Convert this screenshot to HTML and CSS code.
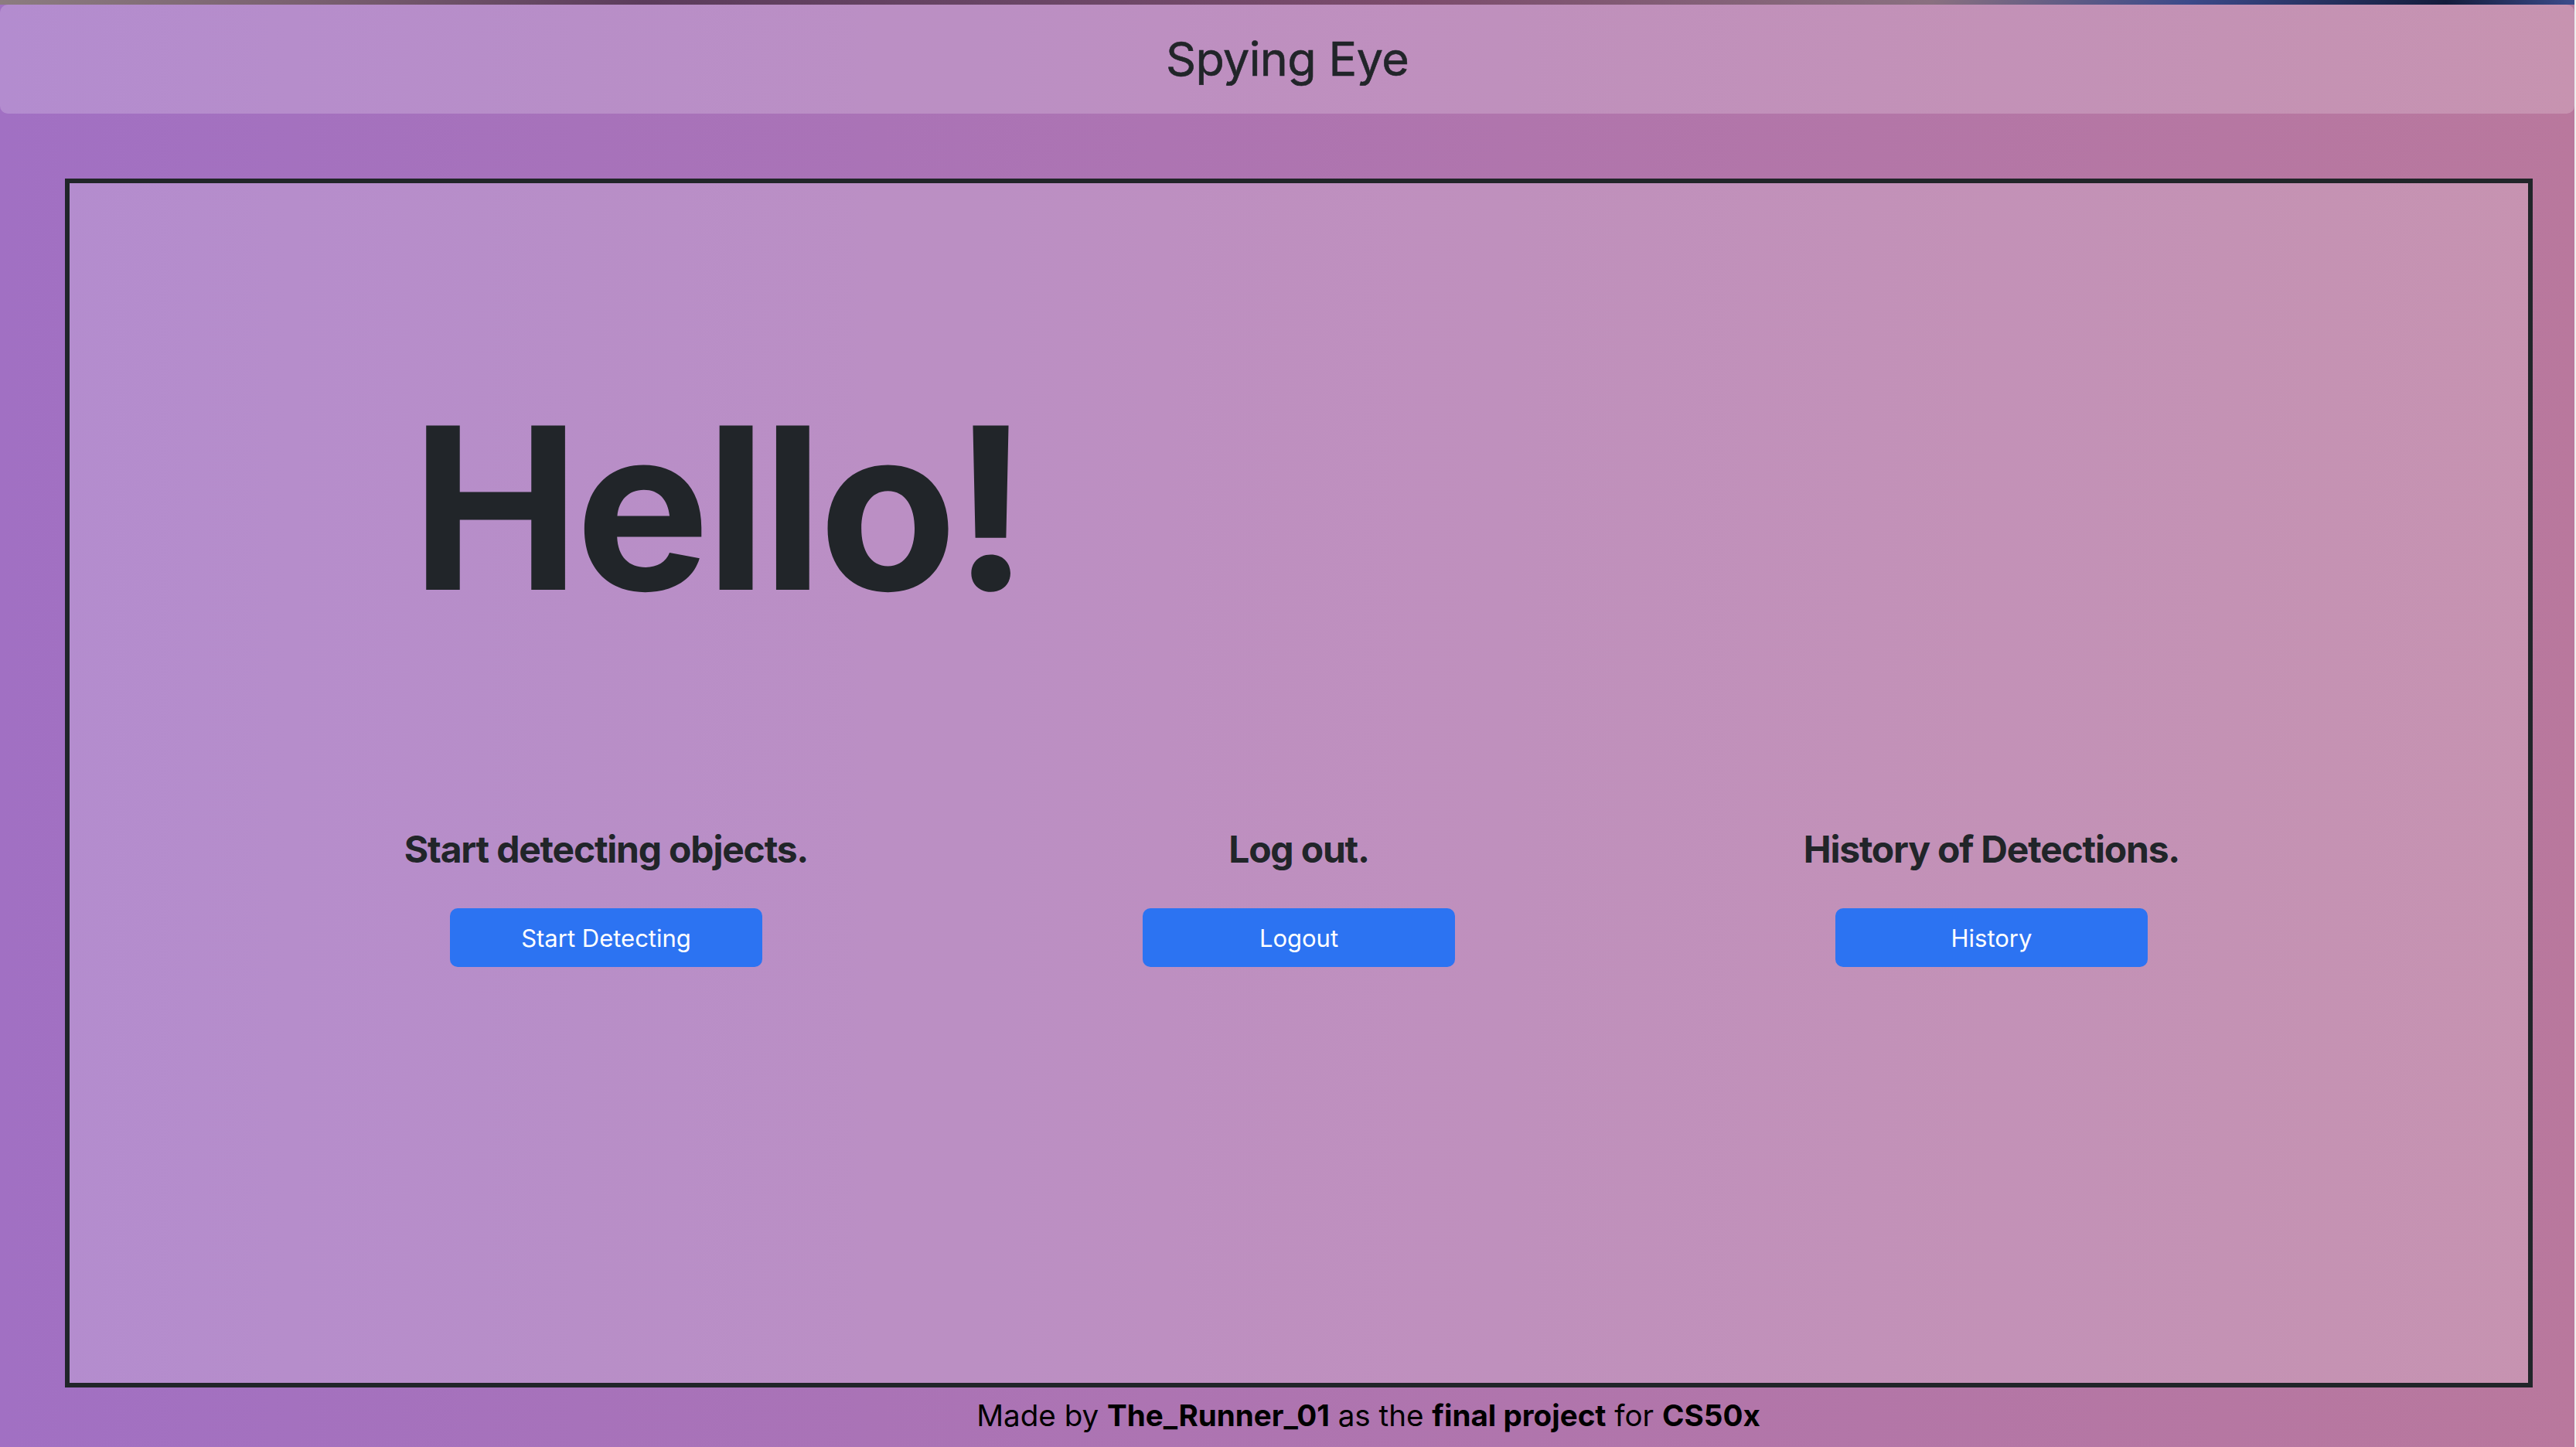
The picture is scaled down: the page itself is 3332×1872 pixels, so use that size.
FILE: index.html
```html
<!DOCTYPE html>
<html lang="en">
<head>
    <meta charset="UTF-8">
    <meta name="viewport" content="width=device-width, initial-scale=1.0">
    <title>Spying Eye</title>
    <link rel="stylesheet" href="styles.css">
</head>
<body>
    <div class="page">
        <div class="top-strip"></div>

        <nav class="navbar">
            <span class="brand">Spying Eye</span>
        </nav>

        <main class="main-box">
            <h1 class="hello">Hello!</h1>

            <div class="actions">
                <div class="action">
                    <h3>Start detecting objects.</h3>
                    <button type="button" class="btn">Start Detecting</button>
                </div>
                <div class="action">
                    <h3>Log out.</h3>
                    <button type="button" class="btn">Logout</button>
                </div>
                <div class="action">
                    <h3>History of Detections.</h3>
                    <button type="button" class="btn">History</button>
                </div>
            </div>
        </main>

        <footer class="footer">
            Made by <b>The_Runner_01</b> as the <b>final project</b> for <b>CS50x</b>
        </footer>
    </div>
</body>
</html>
```

FILE: styles.css
```css
html, body {
    margin: 0;
    padding: 0;
    background-color: #ededed;
}
body {
    font-family: Inter, "Noto Sans", "Liberation Sans", sans-serif;
    color: #212529;
}
.page {
    width: 3330px;
    height: 1872px;
    overflow: hidden;
    background: linear-gradient(to right, #a170c3, #ad74b2 45%, #b9789d);
}
.top-strip {
    height: 6px;
    background: linear-gradient(to right, #8c7c80 0%, #7a6070 12%, #5c3c5c 25%, #6a4666 40%, #7c4c6c 55%, #8a7080 75%, #3c4a8a 85%, #141c3c 95%, #3c4c8c 100%);
}
.navbar {
    height: 141px;
    display: flex;
    align-items: center;
    justify-content: center;
    background-color: rgba(255, 255, 255, 0.2);
    border-radius: 10px;
}
.brand {
    font-size: 61px;
    line-height: 1;
    letter-spacing: -0.01em;
    -webkit-text-stroke: 0.6px #212529;
}
.main-box {
    box-sizing: border-box;
    height: 1564px;
    margin: 84px 54px 0 84px;
    border: 6px solid #212529;
    background-color: rgba(255, 255, 255, 0.2);
    padding-top: 274px;
}
.hello {
    margin: 0 0 272px 442px;
    font-size: 292px;
    line-height: 1;
    font-weight: 700;
    letter-spacing: -0.02em;
}
.actions {
    width: 2688px;
    margin: 0 auto;
    display: grid;
    grid-template-columns: repeat(3, 1fr);
}
.action {
    display: flex;
    flex-direction: column;
    align-items: center;
}
.action h3 {
    margin: 0 0 52px 0;
    font-size: 48px;
    line-height: 1;
    font-weight: 700;
    letter-spacing: -0.025em;
}
.btn {
    width: 404px;
    height: 76px;
    border: none;
    border-radius: 10px;
    background-color: #2c73f2;
    color: #fff;
    font-family: inherit;
    font-size: 31px;
}
.footer {
    margin-top: 17px;
    padding-left: 210px;
    text-align: center;
    font-size: 38.6px;
    line-height: 1;
    color: #000;
}
.footer b {
    font-weight: 700;
}
```
